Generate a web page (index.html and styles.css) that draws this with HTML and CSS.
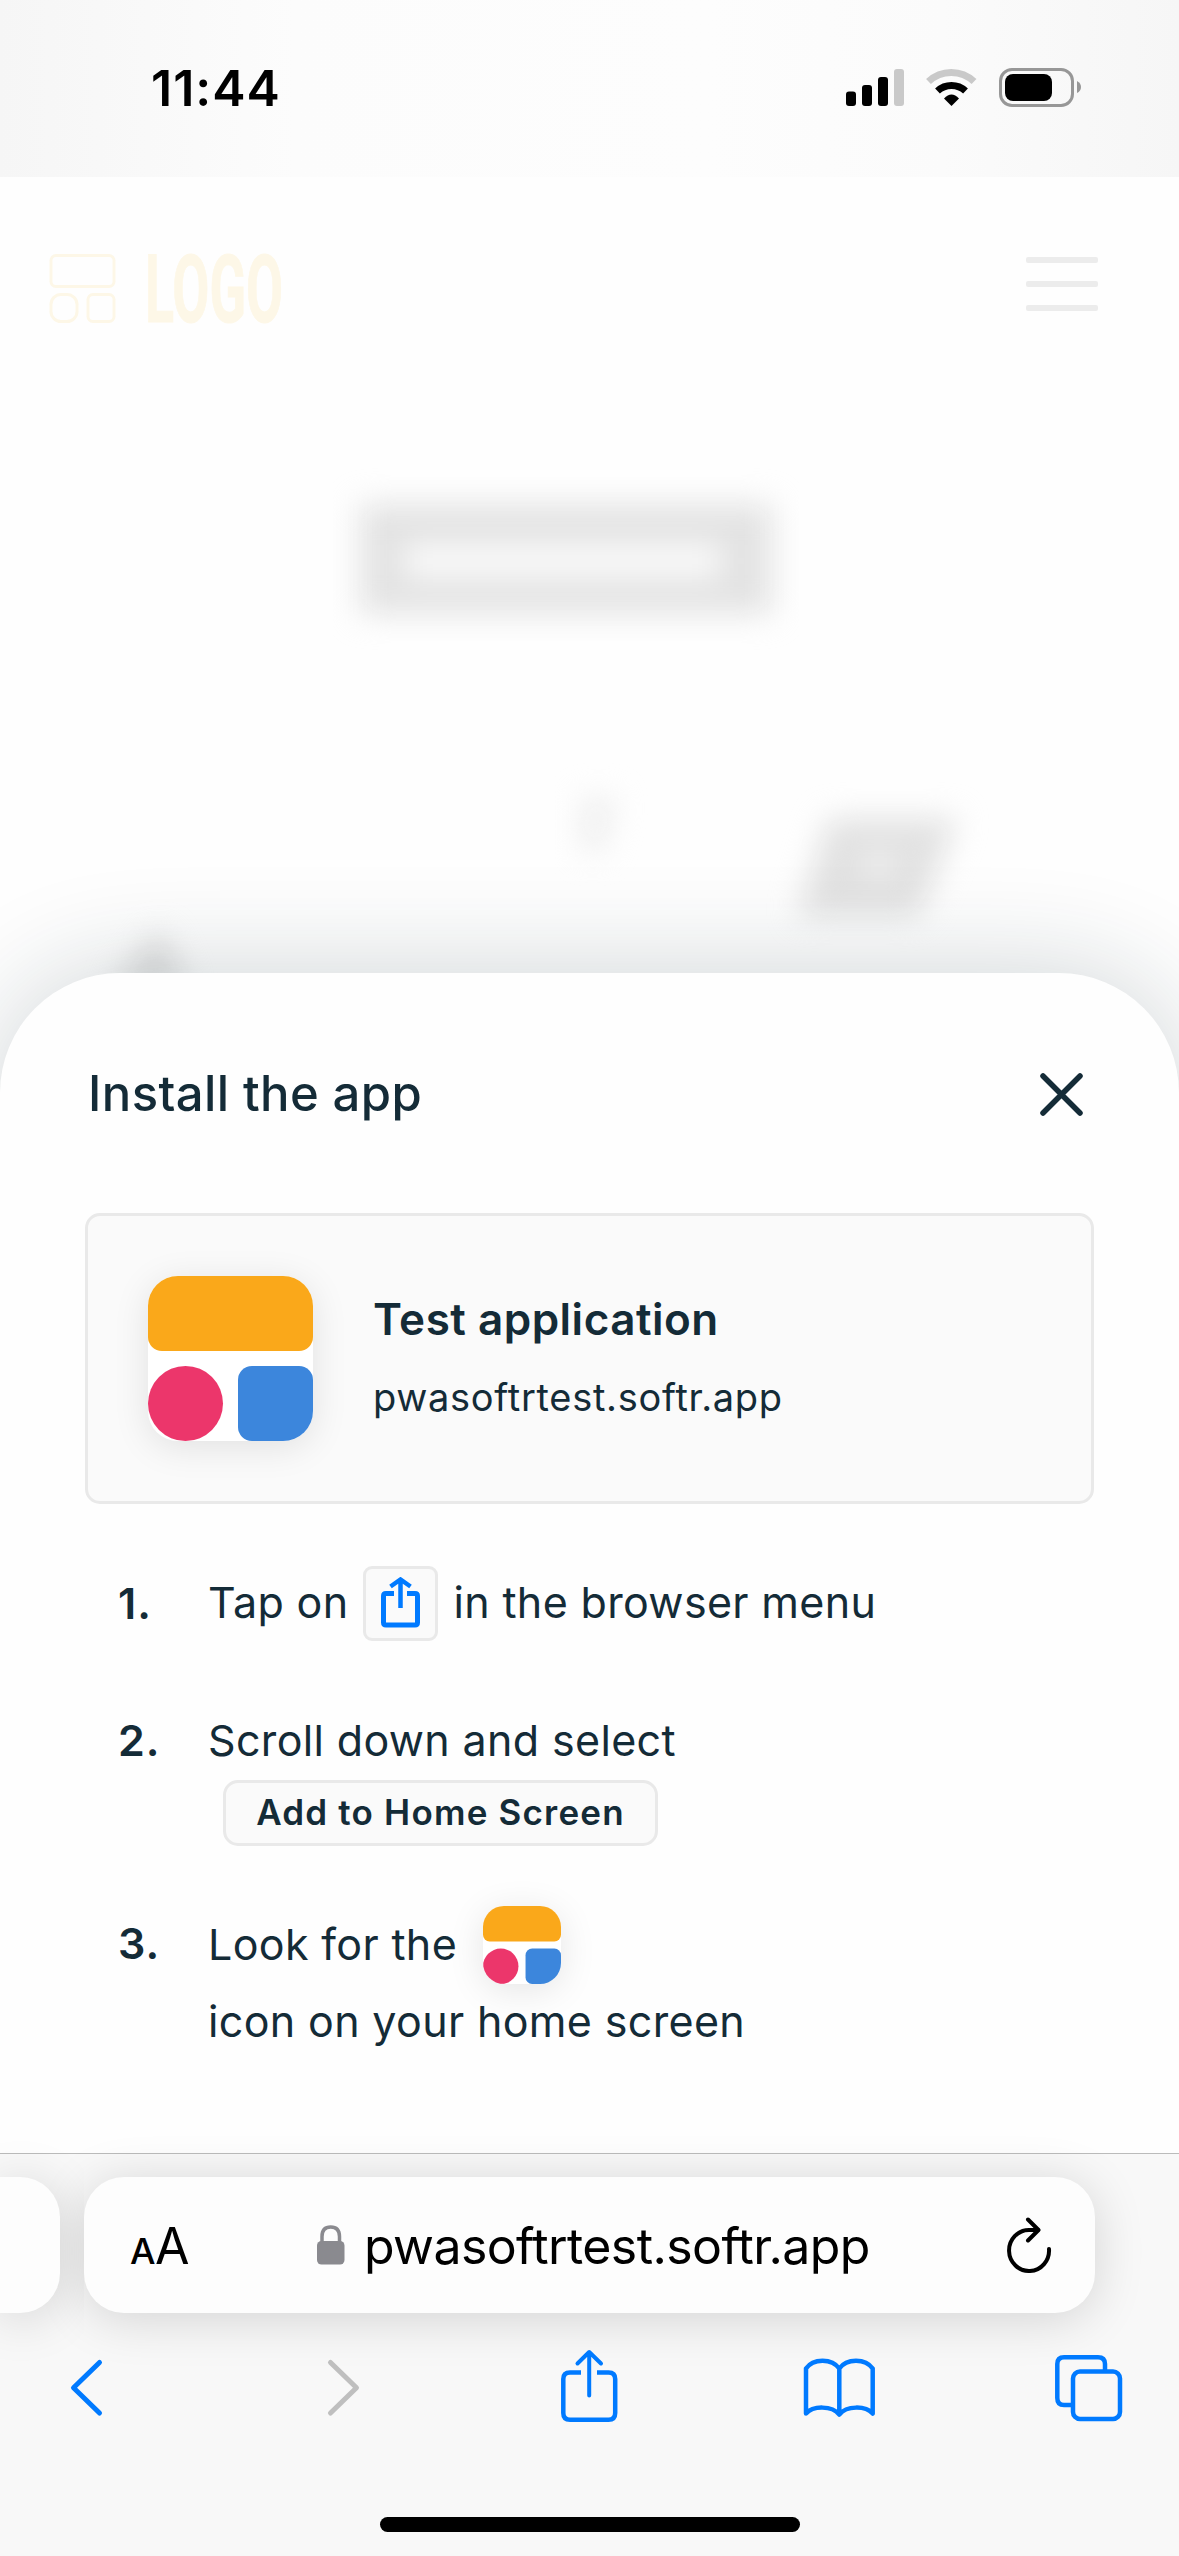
FILE: index.html
```html
<!DOCTYPE html>
<html lang="en">
<head>
<meta charset="UTF-8">
<title>Install the app</title>
<link rel="stylesheet" href="styles.css">
</head>
<body>

<div class="status">
    <span class="time">11:44</span>
    <svg class="status-icons" width="236" height="40" viewBox="846 68 236 40">
        <rect x="846" y="91.5" width="10" height="14.5" rx="3"/>
        <rect x="862" y="85" width="10" height="21" rx="3"/>
        <rect x="878" y="77" width="10" height="29" rx="3"/>
        <rect x="894" y="69" width="10" height="37" rx="3" fill="#c9c9c9"/>
        <path d="M928.500 81.500A33 33 0 0 1 974 81.500" fill="none" stroke="#c9c9c9" stroke-width="7"/>
        <path d="M937.500 91A20.500 20.500 0 0 1 965.500 91" fill="none" stroke="#000" stroke-width="7"/>
        <path d="M944 98.500Q951.500 90.500 959 98.500L951.500 106Z"/>
        <rect x="1000.500" y="69.500" width="72" height="36" rx="11.500" fill="none" stroke="#979797" stroke-width="3"/>
        <rect x="1005" y="74" width="47" height="27" rx="8"/>
        <path d="M1077 81Q1081 83 1081 87Q1081 91 1077 93Z" fill="#979797"/>
    </svg>
</div>

<div class="header">
    <svg class="logo" width="234" height="72" viewBox="49 253 234 72">
        <g fill="none" stroke="#fdf7e7" stroke-width="3">
            <rect x="51" y="255.500" width="63" height="31" rx="5"/>
            <rect x="51" y="294.500" width="26" height="27" rx="10"/>
            <rect x="88" y="294.500" width="26" height="27" rx="5"/>
        </g>
        <text class="logo-text" x="145" y="322" textLength="138" lengthAdjust="spacingAndGlyphs">LOGO</text>
    </svg>
    <div class="burger"><i></i><i></i><i></i></div>
</div>

<!-- page content, blurred behind the sheet -->
<svg class="backdrop" width="1179" height="573" viewBox="0 400 1179 573">
    <defs>
        <filter id="blur" x="-50%" y="-50%" width="200%" height="200%" color-interpolation-filters="sRGB"><feGaussianBlur stdDeviation="15"/></filter>
    </defs>
    <g filter="url(#blur)">
        <rect x="360" y="504" width="412" height="110" fill="#e3e3e3"/>
        <rect x="405" y="544" width="315" height="34" fill="#fafafa"/>
        <path d="M828 818H958L918 916H798Z" fill="#e2e2e2"/>
        <rect x="868" y="854" width="22" height="22" fill="#f8f8f8"/>
        <path d="M582 798H616L602 852H582Z" fill="#eee"/>
        <path d="M160 930L188 990H110Z" fill="#e0e0e0"/>
    </g>
</svg>

<div class="sheet">
    <div class="sheet-header">
        <h1>Install the app</h1>
        <svg width="43" height="43" viewBox="0 0 43 43" fill="none" stroke="#142b37" stroke-width="5.500" stroke-linecap="round">
            <path d="M3 3L40 40M40 3L3 40"/>
        </svg>
    </div>

    <div class="card">
        <svg class="app-icon" width="165" height="165" viewBox="0 0 165 165">
            <rect width="165" height="75" rx="14" fill="#faa81a"/>
            <circle cx="37.500" cy="127.500" r="37.500" fill="#ec366b"/>
            <rect x="90" y="90" width="75" height="75" rx="14" fill="#3c86dc"/>
        </svg>
        <div class="app-info">
            <div class="app-name">Test application</div>
            <div class="app-url">pwasoftrtest.softr.app</div>
        </div>
    </div>

    <div class="steps">
        <div class="step step-1">
            <b>1.</b>
            <div class="line">
                <span>Tap on</span>
                <div class="share-box">
                    <svg width="39" height="51" viewBox="0 0 39 51" fill="none" stroke="#007aff" stroke-width="5">
                        <path d="M13 16.500H5Q2.500 16.500 2.500 19V45.500Q2.500 48 5 48H34Q36.500 48 36.500 45.500V19Q36.500 16.500 34 16.500H26"/>
                        <path d="M19.500 31V3M9.500 9.500L19.500 2.500L29.500 9.500" stroke-width="4.500"/>
                    </svg>
                </div>
                <span>in the browser menu</span>
            </div>
        </div>
        <div class="step step-2">
            <b>2.</b>
            <div>
                <span>Scroll down and select</span>
                <div class="add">Add to Home Screen</div>
            </div>
        </div>
        <div class="step step-3">
            <b>3.</b>
            <div>
                <div class="line">
                    <span>Look for the</span>
                    <svg class="app-icon small" width="78" height="78" viewBox="0 0 165 165">
                        <rect width="165" height="75" rx="14" fill="#faa81a"/>
                        <circle cx="37.500" cy="127.500" r="37.500" fill="#ec366b"/>
                        <rect x="90" y="90" width="75" height="75" rx="14" fill="#3c86dc"/>
                    </svg>
                </div>
                <span>icon on your home screen</span>
            </div>
        </div>
    </div>
</div>

<div class="toolbar">
    <div class="tabs">
        <div class="tab-prev"></div>
        <div class="address">
            <div class="aa"><small>A</small>A</div>
            <svg class="lock" width="28" height="40" viewBox="0 0 28 40">
                <rect x="0" y="16" width="27.500" height="23.500" rx="4.500" fill="#8a8a8f"/>
                <path d="M5 18V11.500Q5 2 13.700 2T22.500 11.500V18" fill="none" stroke="#8a8a8f" stroke-width="3.500"/>
            </svg>
            <span class="url">pwasoftrtest.softr.app</span>
            <svg class="reload" width="46" height="56" viewBox="1006 2216 46 56" fill="none" stroke="#000" stroke-width="4" stroke-linecap="round" stroke-linejoin="round">
                <path d="M1049 2248A20 20.500 0 1 1 1029 2229H1038"/>
                <path d="M1028 2218.500L1038.500 2229L1028 2239.500"/>
            </svg>
        </div>
    </div>
    <svg class="nav" width="1179" height="80" viewBox="0 2346 1179 80" fill="none" stroke="#007aff" stroke-width="4.500" stroke-linecap="round" stroke-linejoin="round">
        <path d="M99.500 2362.500L73.500 2387.700L99.500 2413" stroke-width="5"/>
        <path d="M330.500 2362.500L356.500 2387.700L330.500 2413" stroke="#bfbfbf" stroke-width="5"/>
        <path d="M581 2372.500H570Q563.300 2372.500 563.300 2379V2413Q563.300 2419.700 570 2419.700H608.500Q615.200 2419.700 615.200 2413V2379Q615.200 2372.500 608.500 2372.500H597" stroke-linecap="butt"/>
        <path d="M589.200 2395.500V2353M577.500 2363.500L589.200 2352L601 2363.500" stroke-width="4"/>
        <path d="M839.300 2368.500C832 2358 813 2358 806 2368.500V2413.500C813 2405.500 832 2405.500 839.300 2414.500C846.500 2405.500 865.500 2405.500 872.700 2413.500V2368.500C865.500 2358 846.500 2358 839.300 2368.500V2414"/>
        <path d="M1071 2405H1064Q1057.300 2405 1057.300 2398V2364Q1057.300 2357.200 1064 2357.200H1098Q1105 2357.200 1105 2364V2370" stroke-linecap="butt"/>
        <rect x="1073" y="2371.500" width="47" height="47.500" rx="7"/>
    </svg>
    <div class="home"></div>
</div>

</body>
</html>
```
FILE: styles.css
```css
* {
    box-sizing: border-box;
}
body {
    margin: 0;
    width: 1179px;
    height: 2556px;
    overflow: hidden;
    background: #fefefe;
    color: #142b37;
    font-family: Inter, sans-serif;
    display: flex;
    flex-direction: column;
}
svg {
    display: block;
    flex: none;
}
.status {
    height: 177px;
    padding: 0 97px 2px 151px;
    display: flex;
    align-items: center;
    justify-content: space-between;
    background: linear-gradient(90deg, #f6f6f6, #fcfcfc 25%, #fdfdfd 60%, #fbfbfb 80%, #f6f6f6);
    color: #000;
}
.time {
    font-size: 50px;
    font-weight: 600;
    letter-spacing: 1px;
}
.header {
    height: 223px;
    padding: 76px 81px 0 49px;
    display: flex;
    align-items: flex-start;
    justify-content: space-between;
}
.logo {
    overflow: visible;
}
.logo-text {
    font-family: Roboto, sans-serif;
    font-weight: 700;
    font-size: 94px;
    fill: #fdf7e7;
    stroke: #fdf7e7;
    stroke-width: 1px;
}
.burger {
    margin-top: 4px;
    width: 72px;
    display: flex;
    flex-direction: column;
    gap: 18px;
}
.burger i {
    height: 6px;
    border-radius: 2px;
    background: #ececec;
}
.sheet {
    height: 1180px;
    padding: 96px 85px 0;
    border-radius: 120px 120px 0 0;
    background: #fefefe;
    box-shadow: 0 0 110px rgba(20, 43, 55, 0.2);
}
.sheet-header {
    height: 144px;
    padding: 0 11px 0 3px;
    display: flex;
    align-items: flex-start;
    justify-content: space-between;
}
.sheet-header svg {
    margin-top: 4px;
}
h1 {
    margin: 0;
    font-size: 49px;
    line-height: 50px;
    font-weight: 500;
    letter-spacing: 0.4px;
}
.card {
    height: 291px;
    padding: 0 60px;
    display: flex;
    align-items: center;
    gap: 60px;
    border: 3px solid #e9e9e9;
    border-radius: 15px;
    background: #fafafa;
}
.app-icon {
    border-radius: 30px;
    background: #fff;
    box-shadow: 0 6px 36px rgba(0, 0, 0, 0.1);
}
.app-icon.small {
    margin-left: 26px;
    border-radius: 21px;
}
.app-info {
    padding-bottom: 2px;
}
.app-name {
    font-size: 44px;
    line-height: 60px;
    font-weight: 600;
    letter-spacing: 0.5px;
}
.app-url {
    margin-top: 18px;
    font-size: 38px;
    line-height: 60px;
    letter-spacing: 0.7px;
}
.steps {
    padding: 62px 33px 0;
    font-size: 43px;
    line-height: 75px;
    letter-spacing: 0.35px;
}
.step {
    display: flex;
}
.step b {
    width: 90px;
    font-weight: 600;
    letter-spacing: 1px;
}
.step-2 {
    margin-top: 62px;
}
.step-3 {
    margin-top: 60px;
}
.line {
    display: flex;
    align-items: center;
}
.line span {
    padding-bottom: 2px;
    line-height: 73px;
}
.share-box {
    width: 75px;
    height: 75px;
    margin: 0 15px 0 15px;
    padding-bottom: 2px;
    display: flex;
    align-items: center;
    justify-content: center;
    border: 3px solid #e9e9e9;
    border-radius: 9px;
    background: #fafafa;
}
.add {
    width: 435px;
    height: 66px;
    margin: 2px 0 0 15px;
    border: 3px solid #e9e9e9;
    border-radius: 15px;
    background: #fafafa;
    text-align: center;
    font-size: 35px;
    line-height: 59px;
    font-weight: 600;
    letter-spacing: 1.2px;
}
.toolbar {
    position: relative;
    height: 403px;
    border-top: 1px solid #bbb;
    background: #f8f8f8;
    color: #000;
}
.tabs {
    height: 192px;
    padding-top: 23px;
    display: flex;
}
.tab-prev, .address {
    height: 136px;
    background: #fdfdfd;
    box-shadow: 0 6px 50px rgba(0, 0, 0, 0.15);
}
.tab-prev {
    position: relative;
    z-index: 1;
    width: 60px;
    margin-right: 24px;
    border-radius: 0 40px 40px 0;
    clip-path: inset(-60px -24px -60px 0);
}
.address {
    width: 1011px;
    padding: 0 43px 0 46px;
    display: flex;
    align-items: center;
    border-radius: 40px;
}
.aa {
    width: 187px;
    padding-top: 1px;
    font-size: 50px;
    letter-spacing: -0.5px;
}
.aa small {
    font-size: 36px;
    font-weight: 500;
}
.lock {
    margin-right: 19px;
}
.url {
    flex: 1;
    padding-top: 1px;
    font-size: 50px;
    letter-spacing: -0.6px;
}
.home {
    width: 420px;
    height: 15px;
    margin: 91px auto 0;
    border-radius: 8px;
    background: #000;
}
```
